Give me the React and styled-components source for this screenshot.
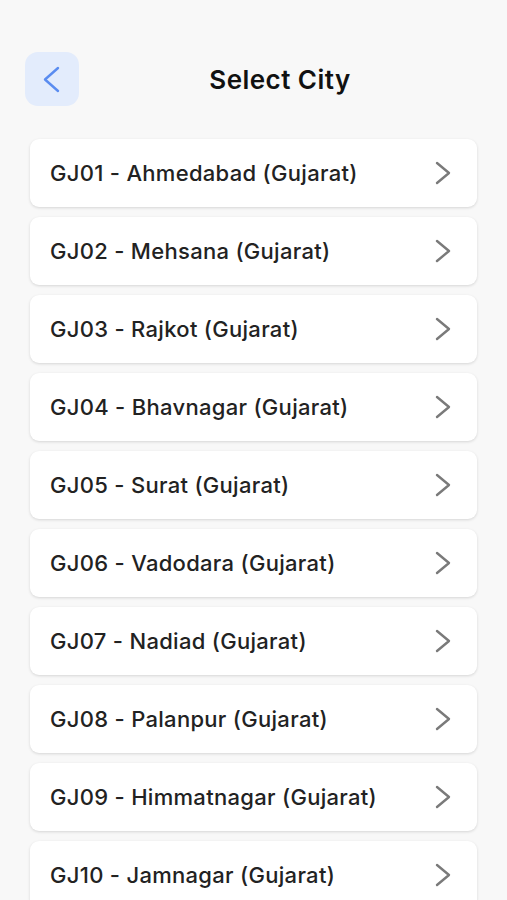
import React from 'react';
import styled, { createGlobalStyle } from 'styled-components';

const GlobalStyle = createGlobalStyle`
  html, body {
    margin: 0;
    padding: 0;
    background: #f8f8f8;
    font-family: Inter, "Noto Sans", sans-serif;
  }
`;

const Page = styled.div`
  width: 507px;
  height: 900px;
  overflow: hidden;
  background: #f8f8f8;
`;

const Header = styled.div`
  display: flex;
  align-items: center;
  padding: 52px 26px 0 25px;
`;

const BackButton = styled.button`
  width: 54px;
  height: 54px;
  border: none;
  border-radius: 13px;
  background: #e3ecfc;
  display: flex;
  align-items: center;
  justify-content: center;
  padding: 0 2px 0 0;
  cursor: pointer;
`;

const Title = styled.h1`
  flex: 1;
  margin: 0;
  text-align: center;
  font-size: 26px;
  font-weight: 600;
  letter-spacing: 0.45px;
  color: #111;
`;

const List = styled.div`
  display: flex;
  flex-direction: column;
  gap: 10px;
  padding: 33px 30px 0 30px;
`;

const Card = styled.div`
  height: 68px;
  background: #fff;
  border-radius: 9px;
  box-shadow: 0 1px 3px rgba(0, 0, 0, 0.14);
  display: flex;
  align-items: center;
  justify-content: space-between;
  padding: 0 26px 0 20px;
  flex-shrink: 0;
`;

const CityName = styled.span`
  font-size: 22px;
  font-weight: 500;
  letter-spacing: 0.3px;
  color: #222;
`;

const cities = [
  'GJ01 - Ahmedabad (Gujarat)',
  'GJ02 - Mehsana (Gujarat)',
  'GJ03 - Rajkot (Gujarat)',
  'GJ04 - Bhavnagar (Gujarat)',
  'GJ05 - Surat (Gujarat)',
  'GJ06 - Vadodara (Gujarat)',
  'GJ07 - Nadiad (Gujarat)',
  'GJ08 - Palanpur (Gujarat)',
  'GJ09 - Himmatnagar (Gujarat)',
  'GJ10 - Jamnagar (Gujarat)',
];

const Chevron = ({ left, color, width, height, stroke }) => (
  <svg width={width} height={height} viewBox={`0 0 ${width} ${height}`} fill="none">
    <path
      d={
        left
          ? `M${width - 2} 2 L2 ${height / 2} L${width - 2} ${height - 2}`
          : `M2 2 L${width - 2} ${height / 2} L2 ${height - 2}`
      }
      stroke={color}
      strokeWidth={stroke}
      strokeLinecap="round"
      strokeLinejoin="round"
    />
  </svg>
);

const App = () => {
  return (
    <Page>
      <GlobalStyle />
      <Header>
        <BackButton>
          <Chevron left color="#5a8cf0" width={17} height={27} stroke={2.4} />
        </BackButton>
        <Title>Select City</Title>
      </Header>
      <List>
        {cities.map((city) => (
          <Card key={city}>
            <CityName>{city}</CityName>
            <Chevron color="#7a7a7a" width={16} height={24} stroke={2.4} />
          </Card>
        ))}
      </List>
    </Page>
  );
};

export default App;
